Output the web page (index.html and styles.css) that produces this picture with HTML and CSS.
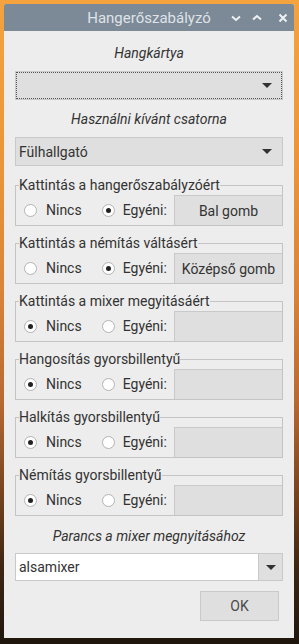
FILE: index.html
```html
<!DOCTYPE html>
<html lang="hu">
<head>
    <meta charset="UTF-8">
    <title>Hangerőszabályzó</title>
    <link rel="stylesheet" href="styles.css">
</head>
<body>
    <div class="window">
        <header class="titlebar">
            <span class="title-space"></span>
            <span class="title">Hangerőszabályzó</span>
            <div class="title-buttons">
                <svg width="12" height="12" viewBox="0 0 12 12"><path d="M2 4.5 L6 8 L10 4.5" fill="none" stroke="#eef1f4" stroke-width="2"/></svg>
                <svg width="12" height="12" viewBox="0 0 12 12"><path d="M2 7.5 L6 4 L10 7.5" fill="none" stroke="#eef1f4" stroke-width="2"/></svg>
                <svg class="close" width="12" height="12" viewBox="0 0 12 12"><path d="M2.5 2.5 L9.5 9.5 M9.5 2.5 L2.5 9.5" fill="none" stroke="#eef1f4" stroke-width="2"/></svg>
            </div>
        </header>
        <main class="content">
            <p class="caption first">Hangkártya</p>
            <div class="combo focused">
                <span class="combo-text"></span>
                <span class="arrow"></span>
            </div>

            <p class="caption">Használni kívánt csatorna</p>
            <div class="combo">
                <span class="combo-text">Fülhallgató</span>
                <span class="arrow"></span>
            </div>

            <fieldset class="frame first-frame">
                <legend>Kattintás a hangerőszabályzóért</legend>
                <div class="row">
                    <span class="radio"></span><span class="opt">Nincs</span>
                    <span class="radio on"></span><span class="opt">Egyéni:</span>
                    <button class="key">Bal gomb</button>
                </div>
            </fieldset>

            <fieldset class="frame">
                <legend>Kattintás a némítás váltásért</legend>
                <div class="row">
                    <span class="radio"></span><span class="opt">Nincs</span>
                    <span class="radio on"></span><span class="opt">Egyéni:</span>
                    <button class="key">Középső gomb</button>
                </div>
            </fieldset>

            <fieldset class="frame">
                <legend>Kattintás a mixer megyitásáért</legend>
                <div class="row">
                    <span class="radio on"></span><span class="opt">Nincs</span>
                    <span class="radio"></span><span class="opt">Egyéni:</span>
                    <button class="key"></button>
                </div>
            </fieldset>

            <fieldset class="frame">
                <legend>Hangosítás gyorsbillentyű</legend>
                <div class="row">
                    <span class="radio on"></span><span class="opt">Nincs</span>
                    <span class="radio"></span><span class="opt">Egyéni:</span>
                    <button class="key"></button>
                </div>
            </fieldset>

            <fieldset class="frame">
                <legend>Halkítás gyorsbillentyű</legend>
                <div class="row">
                    <span class="radio on"></span><span class="opt">Nincs</span>
                    <span class="radio"></span><span class="opt">Egyéni:</span>
                    <button class="key"></button>
                </div>
            </fieldset>

            <fieldset class="frame">
                <legend>Némítás gyorsbillentyű</legend>
                <div class="row">
                    <span class="radio on"></span><span class="opt">Nincs</span>
                    <span class="radio"></span><span class="opt">Egyéni:</span>
                    <button class="key"></button>
                </div>
            </fieldset>

            <p class="caption cmd">Parancs a mixer megnyitásához</p>
            <div class="entry">
                <span class="entry-text">alsamixer</span>
                <span class="entry-btn"><span class="arrow"></span></span>
            </div>

            <div class="actions">
                <button class="ok">OK</button>
            </div>
        </main>
    </div>
</body>
</html>
```

FILE: styles.css
```css
body {
    margin: 0;
    padding: 4px 0 0 4px;
    height: 644px;
    box-sizing: border-box;
    font-family: Roboto, "Liberation Sans", sans-serif;
    color: #333;
    background: linear-gradient(to bottom, #f4a33f 0%, #ec9538 25%, #d98438 45%, #b96a32 62%, #7a4520 76%, #3e2613 88%, #1f160d 100%);
    overflow: hidden;
}

.window {
    width: 290px;
    height: 634px;
    background-color: #ededed;
    border-radius: 2px 2px 0 0;
    display: flex;
    flex-direction: column;
}

.titlebar {
    height: 27px;
    background-color: #7c8997;
    display: flex;
    align-items: center;
    border-radius: 2px 2px 0 0;
}

.title-space,
.title-buttons {
    width: 64px;
}

.title {
    flex: 1;
    text-align: center;
    color: #dfe3e8;
    font-size: 15px;
}

.title-buttons {
    display: flex;
    align-items: center;
    gap: 9px;
}

.title-buttons .close {
    margin-left: 5px;
}

.content {
    padding: 0 11px;
    display: flex;
    flex-direction: column;
}

.caption {
    margin: 10px 0 0;
    font-size: 14px;
    line-height: 18px;
    font-style: italic;
    text-align: center;
}

.caption.first {
    margin-top: 13px;
}

.combo {
    margin-top: 9px;
    height: 29px;
    box-sizing: border-box;
    border: 1px solid #c9c9c9;
    background-color: #dfdfdf;
    display: flex;
    align-items: center;
    padding: 0 10px 0 3px;
    font-size: 14px;
}

.combo.focused {
    outline: 1px dotted #555;
    outline-offset: -2px;
}

.combo-text {
    flex: 1;
}

.arrow {
    width: 0;
    height: 0;
    border-left: 5px solid transparent;
    border-right: 5px solid transparent;
    border-top: 5px solid #333;
}

.frame {
    margin: 9px 0 0;
    padding: 2px 0 0;
    border: 1px solid #c4c4c4;
    min-width: 0;
}

.first-frame {
    margin-top: 11px;
}

.frame legend {
    padding: 0;
    margin-left: 3px;
    font-size: 14px;
    line-height: 16px;
}

.row {
    display: flex;
    align-items: center;
    height: 30px;
    font-size: 14px;
}

.radio {
    width: 13px;
    height: 13px;
    box-sizing: border-box;
    border: 1px solid #b3b3b3;
    border-radius: 50%;
    background-color: #fff;
    margin-left: 8px;
    margin-right: 9px;
    display: flex;
    align-items: center;
    justify-content: center;
}

.radio + .opt + .radio {
    margin-left: 20px;
    margin-right: 8px;
}

.radio.on::after {
    content: "";
    width: 5px;
    height: 5px;
    border-radius: 50%;
    background-color: #222;
}

.key {
    margin-left: auto;
    width: 108px;
    height: 30px;
    box-sizing: border-box;
    border: 1px solid #c9c9c9;
    border-right: none;
    border-bottom: none;
    background-color: #dfdfdf;
    font-family: inherit;
    font-size: 14px;
    color: #333;
    padding: 0;
}

.caption.cmd {
    margin-top: 11px;
}

.entry {
    margin-top: 8px;
    height: 28px;
    display: flex;
}

.entry-text {
    flex: 1;
    background-color: #fff;
    border: 1px solid #c9c9c9;
    border-right: none;
    display: flex;
    align-items: center;
    padding-left: 3px;
    font-size: 14px;
}

.entry-btn {
    width: 25px;
    box-sizing: border-box;
    border: 1px solid #c9c9c9;
    background-color: #dfdfdf;
    display: flex;
    align-items: center;
    justify-content: center;
}

.actions {
    display: flex;
    justify-content: flex-end;
    margin-top: 10px;
    padding-right: 4px;
}

.ok {
    width: 79px;
    height: 30px;
    border: 1px solid #c9c9c9;
    background-color: #dfdfdf;
    font-family: inherit;
    font-size: 14px;
    color: #4a4a4a;
}
```
